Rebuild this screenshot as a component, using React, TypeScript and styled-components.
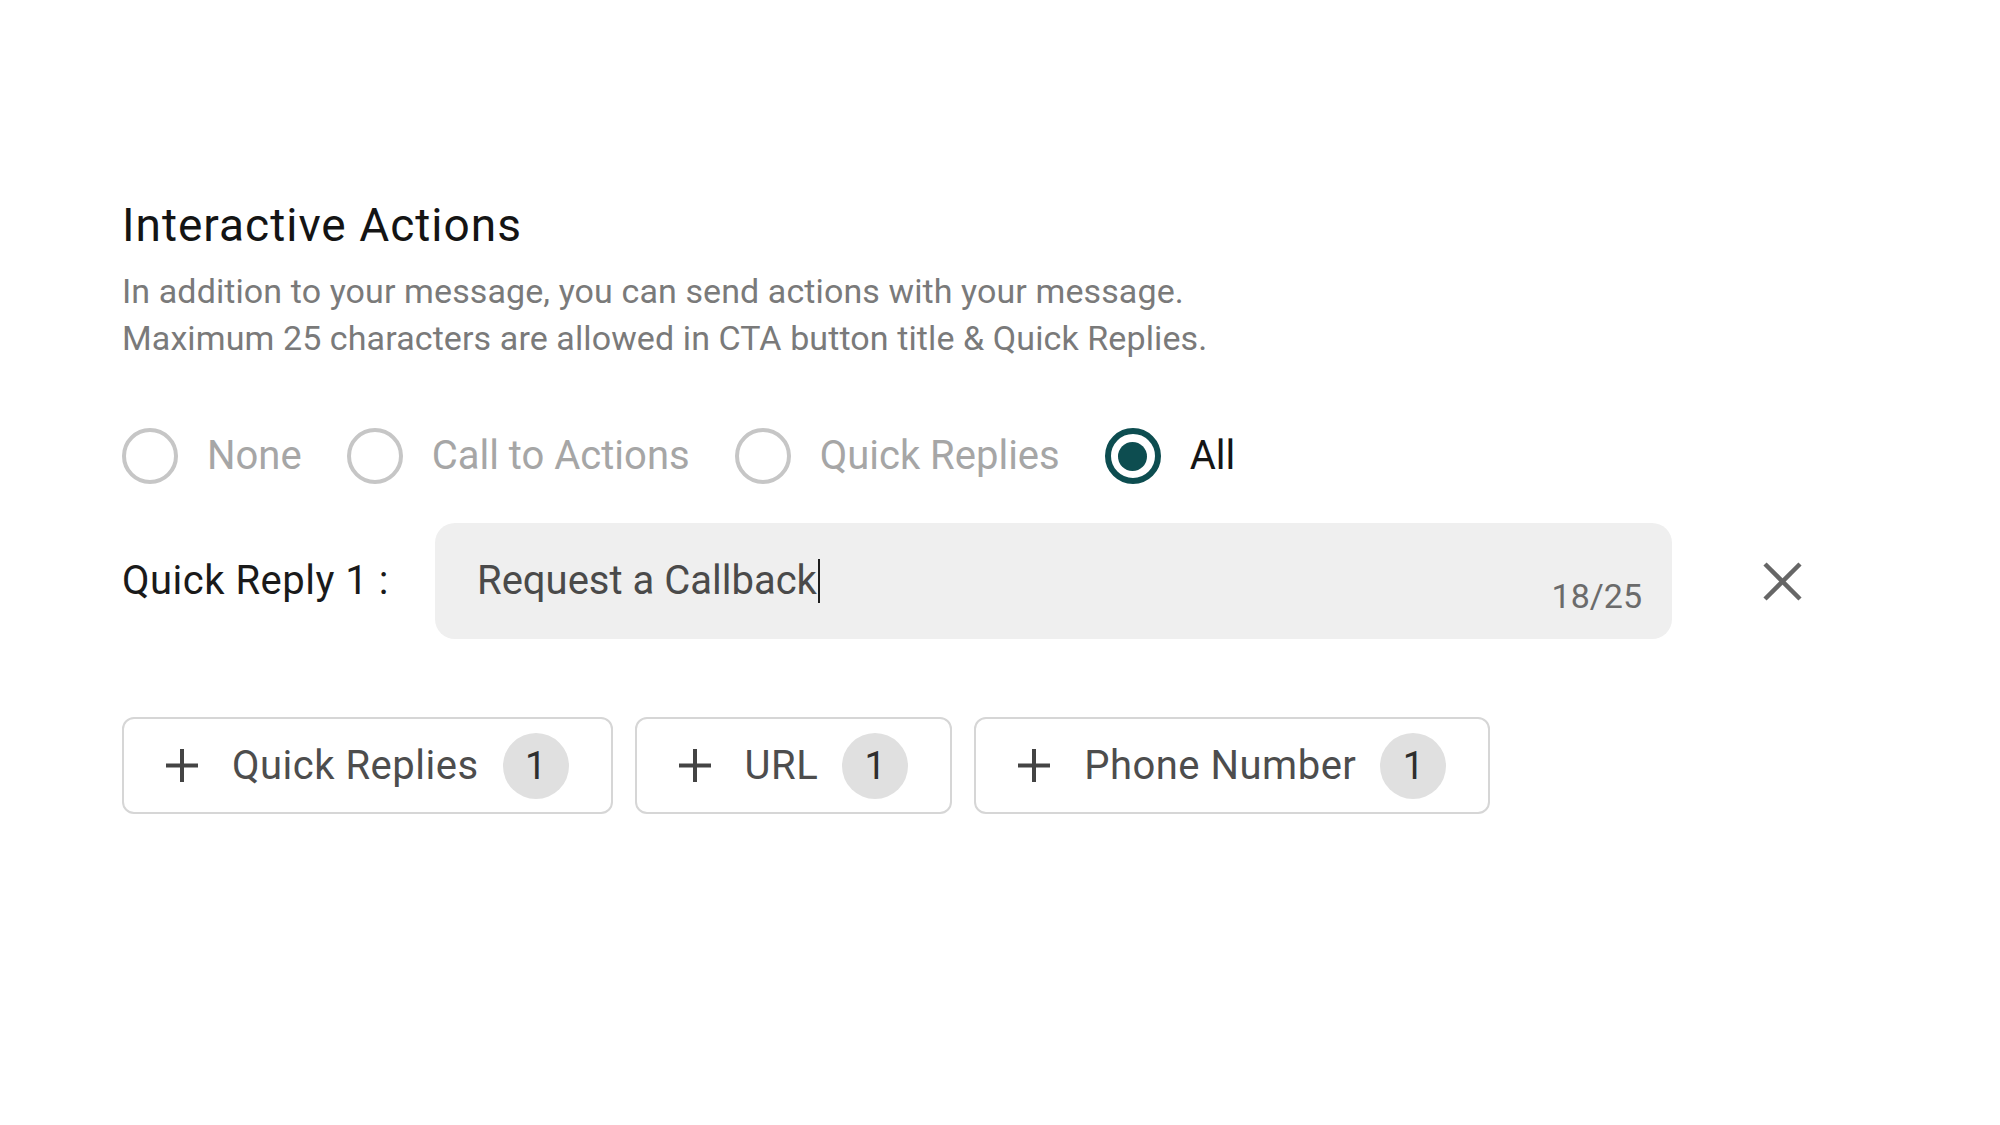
import React from "react";
import styled, { createGlobalStyle } from "styled-components";

const Global = createGlobalStyle`
  html, body { margin: 0; padding: 0; background: #ffffff; }
  body { font-family: Roboto, "Noto Sans", Arial, sans-serif; }
  * { box-sizing: border-box; }
`;

const Page = styled.div`
  width: 2000px;
  height: 1125px;
  padding: 198px 0 0 122px;
  background: #fff;
`;

const Title = styled.h2`
  margin: 0;
  font-size: 46px;
  line-height: 54px;
  font-weight: 400;
  letter-spacing: 1px;
  color: #141414;
`;

const Description = styled.p`
  margin: 16px 0 0;
  font-size: 34px;
  line-height: 47px;
  letter-spacing: 0.1px;
  color: #7a7a7a;
`;

const RadioRow = styled.div`
  display: flex;
  align-items: center;
  gap: 45px;
  margin-top: 66px;
`;

const RadioItem = styled.label<{ $active?: boolean }>`
  display: flex;
  align-items: center;
  gap: 29px;
  font-size: 40px;
  line-height: 56px;
  color: ${(p) => (p.$active ? "#151515" : "#a6a6a6")};
  cursor: pointer;
`;

const RadioCircle = styled.span<{ $active?: boolean }>`
  width: 56px;
  height: 56px;
  border-radius: 50%;
  border: ${(p) => (p.$active ? "6px solid #0d4d50" : "4px solid #c6c6c6")};
  display: flex;
  align-items: center;
  justify-content: center;
  flex-shrink: 0;
  &::after {
    content: "";
    display: ${(p) => (p.$active ? "block" : "none")};
    width: 29px;
    height: 29px;
    border-radius: 50%;
    background: #0d4d50;
  }
`;

const ReplyRow = styled.div`
  display: flex;
  align-items: center;
  margin-top: 39px;
`;

const ReplyLabel = styled.span`
  width: 313px;
  font-size: 40px;
  line-height: 48px;
  letter-spacing: 0.5px;
  color: #1a1a1a;
`;

const InputBox = styled.div`
  width: 1237px;
  height: 116px;
  border-radius: 20px;
  background: #efefef;
  display: flex;
  align-items: center;
  padding: 0 30px 0 42px;
`;

const InputText = styled.span`
  flex: 1;
  display: flex;
  align-items: center;
  font-size: 40px;
  line-height: 48px;
  color: #4a4a4a;
`;

const Caret = styled.span`
  display: inline-block;
  width: 2px;
  height: 44px;
  background: #1e1e1e;
  margin-left: 1px;
`;

const Counter = styled.span`
  align-self: flex-end;
  margin-bottom: 24px;
  font-size: 34px;
  line-height: 38px;
  color: #6b6b6b;
`;

const CloseButton = styled.button`
  margin-left: 91px;
  width: 39px;
  height: 39px;
  padding: 0;
  border: none;
  background: none;
  display: flex;
  cursor: pointer;
`;

const ButtonRow = styled.div`
  display: flex;
  gap: 22px;
  margin-top: 78px;
`;

const AddButton = styled.button`
  height: 97px;
  display: flex;
  align-items: center;
  padding: 0 42px 0 42px;
  border: 2px solid #d6d6d6;
  border-radius: 12px;
  background: #fff;
  font-family: Roboto, "Noto Sans", Arial, sans-serif;
  font-size: 40px;
  letter-spacing: 0.5px;
  color: #4d4d4d;
  cursor: pointer;
`;

const PlusIcon = styled.svg`
  width: 32px;
  height: 33px;
  margin-right: 34px;
  flex-shrink: 0;
`;

const Badge = styled.span`
  width: 66px;
  height: 66px;
  border-radius: 50%;
  background: #e0e0e0;
  color: #2e2e2e;
  margin-left: 24px;
  display: flex;
  align-items: center;
  justify-content: center;
  font-size: 38px;
  letter-spacing: 0;
`;

const Plus = () => (
  <PlusIcon viewBox="0 0 32 33">
    <line x1="16" y1="0" x2="16" y2="33" stroke="#444" strokeWidth="4" />
    <line x1="0" y1="16.5" x2="32" y2="16.5" stroke="#444" strokeWidth="4" />
  </PlusIcon>
);

const options = ["None", "Call to Actions", "Quick Replies", "All"];
const buttons = ["Quick Replies", "URL", "Phone Number"];

export default function App() {
  return (
    <>
      <Global />
      <Page>
        <Title>Interactive Actions</Title>
        <Description>
          In addition to your message, you can send actions with your message.
          <br />
          Maximum 25 characters are allowed in CTA button title &amp; Quick Replies.
        </Description>
        <RadioRow>
          {options.map((o) => (
            <RadioItem key={o} $active={o === "All"}>
              <RadioCircle $active={o === "All"} />
              {o}
            </RadioItem>
          ))}
        </RadioRow>
        <ReplyRow>
          <ReplyLabel>Quick Reply 1 :</ReplyLabel>
          <InputBox>
            <InputText>
              Request a Callback
              <Caret />
            </InputText>
            <Counter>18/25</Counter>
          </InputBox>
          <CloseButton aria-label="remove">
            <svg width="39" height="39" viewBox="0 0 39 39">
              <line x1="2" y1="2" x2="37" y2="37" stroke="#666" strokeWidth="4.5" />
              <line x1="37" y1="2" x2="2" y2="37" stroke="#666" strokeWidth="4.5" />
            </svg>
          </CloseButton>
        </ReplyRow>
        <ButtonRow>
          {buttons.map((b) => (
            <AddButton key={b}>
              <Plus />
              {b}
              <Badge>1</Badge>
            </AddButton>
          ))}
        </ButtonRow>
      </Page>
    </>
  );
}
